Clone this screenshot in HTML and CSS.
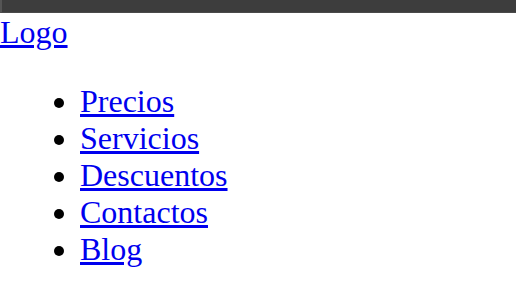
FILE: index.html
```html
<!DOCTYPE html>
<html lang="es">
<head>
<meta charset="utf-8">
<title>Logo</title>
<link rel="stylesheet" href="styles.css">
</head>
<body>
<div class="topbar"></div>
<header class="header">
  <a class="logo" href="#">Logo</a>
  <ul class="nav">
    <li><a href="#">Precios</a></li>
    <li><a href="#">Servicios</a></li>
    <li><a href="#">Descuentos</a></li>
    <li><a href="#">Contactos</a></li>
    <li><a href="#">Blog</a></li>
  </ul>
</header>
</body>
</html>
```
FILE: styles.css
```css
html, body {
  margin: 0;
  padding: 0;
  background: #ffffff;
}
body {
  font-family: "Liberation Serif", "Times New Roman", serif;
  font-size: 32px;
  color: #000000;
}
.topbar {
  height: 12px;
  background: #3d3d3d;
  border-bottom: 1px solid #4a4a4a;
  border-left: 2px solid #555555;
  margin-bottom: 1px;
}
.header a {
  color: #0000ee;
  text-decoration: underline;
}
.logo {
  display: inline;
}
.nav {
  margin: 32px 0;
  padding-left: 80px;
  list-style: disc;
}
```
